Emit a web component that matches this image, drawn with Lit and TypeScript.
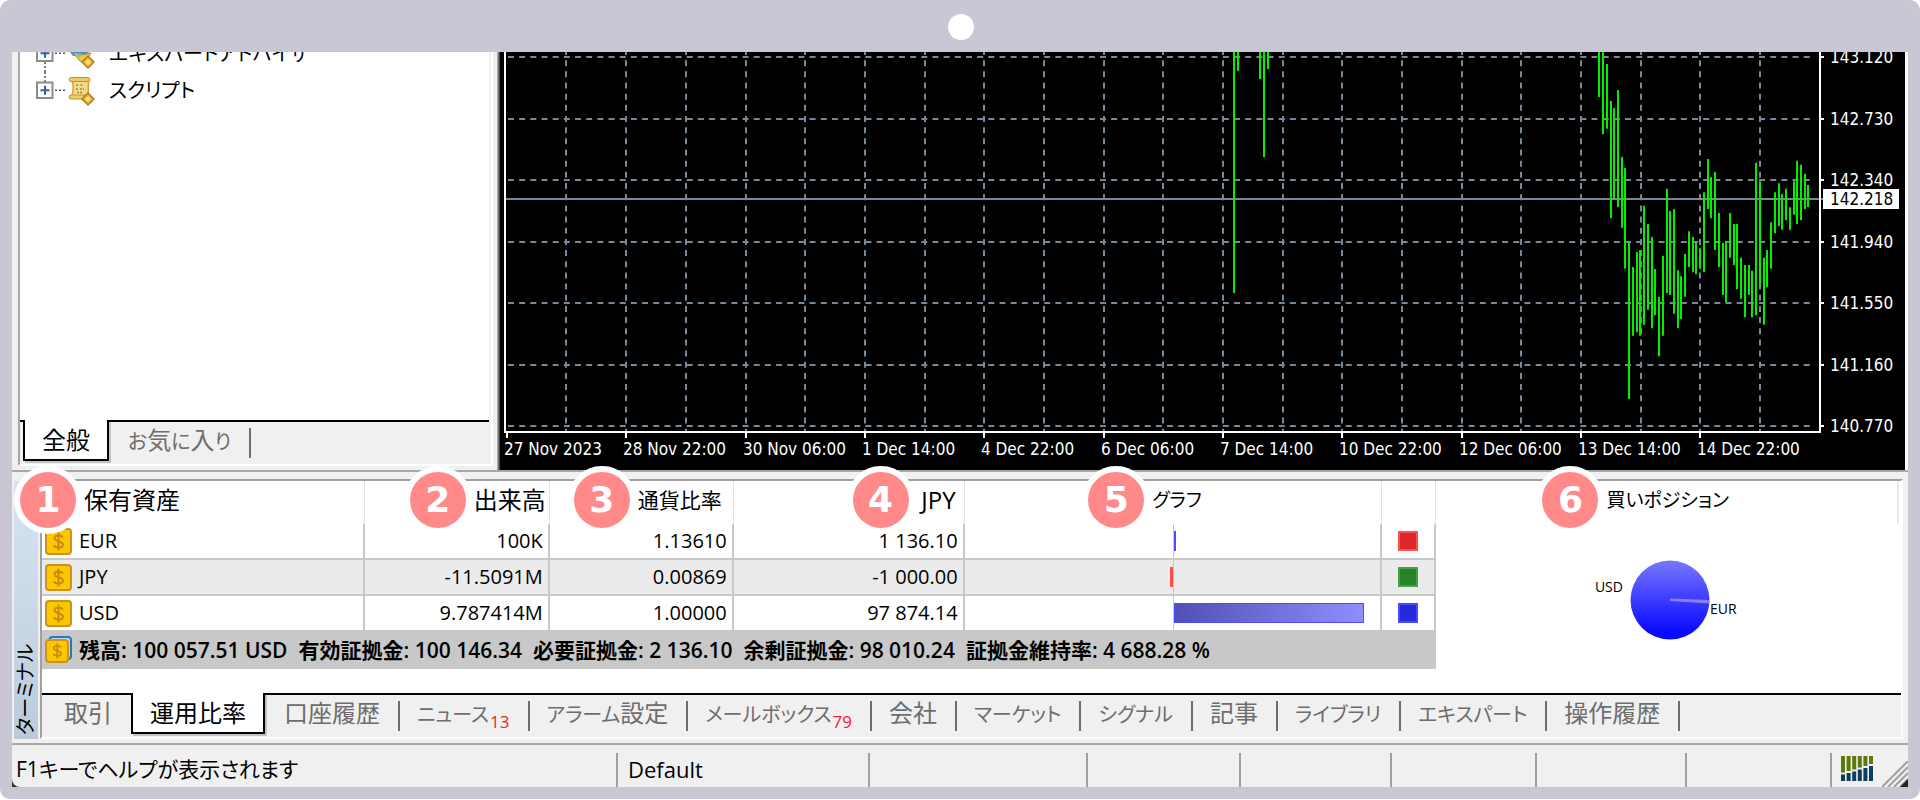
import { LitElement, html, svg, css } from "lit";
import { customElement, property, state } from "lit/decorators.js";
import { classMap } from "lit/directives/class-map.js";

const FONT = css`"Open Sans", "Noto Sans CJK JP", sans-serif`;

/* ---------- price chart ---------- */

const PRICES = ["143.120", "142.730", "142.340", "141.940", "141.550", "141.160", "140.770"];
const DATES = [
  "27 Nov 2023", "28 Nov 22:00", "30 Nov 06:00", "1 Dec 14:00", "4 Dec 22:00", "6 Dec 06:00",
  "7 Dec 14:00", "10 Dec 22:00", "12 Dec 06:00", "13 Dec 14:00", "14 Dec 22:00",
];
/* Highs and lows of consecutive bars, in thirds of a chart unit from the top edge. */
const BARS: [number, number][] = [
  [0, 135], [0, 247], [36, 230], [147, 499], [169, 438], [114, 465], [315, 527], [348, 650],
  [572, 1041], [645, 851], [600, 841], [594, 851], [461, 818], [516, 773], [555, 829], [651, 790],
  [734, 913], [611, 851], [410, 723], [477, 729], [471, 785], [655, 829], [673, 801], [606, 734],
  [538, 645], [555, 661], [572, 667], [589, 650], [421, 661], [321, 471], [376, 499], [360, 594],
  [483, 645], [572, 729], [567, 751], [483, 617], [516, 639], [516, 712], [617, 740], [639, 796],
  [639, 729], [656, 796], [332, 790], [388, 701], [617, 818], [594, 706], [511, 650], [421, 544],
  [394, 522], [427, 533], [410, 505], [466, 533], [388, 488], [326, 516], [338, 505], [365, 471],
  [399, 465],
];
const EARLY_BARS: [number, number][] = [[733, 241], [737, 19], [759, 27], [763, 105], [767, 17]];

@customElement("price-chart")
class PriceChart extends LitElement {
  static styles = css`
    :host { display: block; background: #000; }
    .chart { display: block; width: 100%; height: auto; }
    .grid { stroke: #778899; stroke-width: 2; stroke-dasharray: 6 5.17; }
    .now { stroke: #778899; stroke-width: 2; }
    .axis { stroke: #fff; stroke-width: 2; fill: none; }
    .bar { stroke: #00f000; stroke-width: 2; }
    .label { fill: #fff; font: 17px "DejaVu Sans Condensed", "Open Sans", sans-serif; }
    .box { fill: #fff; }
    .dark { fill: #000; }
  `;
  render() {
    const gx = (k: number) => 5.8 + 59.68 * k;
    const gy = (k: number) => 5 + 61.55 * k;
    return html`
      <svg class="chart" viewBox="0 0 1404 418" role="img" aria-label="Price chart">
        ${Array.from({ length: 21 }, (_, i) => svg`<line class="grid" x1=${Math.round(gx(i + 1))} x2=${Math.round(gx(i + 1))} y1="-3" y2="380"/>`)}
        ${PRICES.map((p, i) => svg`
          <line class="grid" x1="7" x2="1312" y1=${Math.round(gy(i))} y2=${Math.round(gy(i))}/>
          <line class="axis" x1="1318" x2="1323" y1=${Math.round(gy(i))} y2=${Math.round(gy(i))}/>
          <text class="label" x="1329" y=${Math.round(gy(i)) + 6}>${p}</text>`)}
        <line class="now" x1="4" x2="1322" y1="147" y2="147"/>
        ${BARS.map(([hi, lo], i) => svg`<line class="bar" x1=${Math.round(1098.3 + 3.735 * i)} x2=${Math.round(1098.3 + 3.735 * i)} y1=${hi / 3} y2=${lo / 3}/>`)}
        ${EARLY_BARS.map(([x, lo]) => svg`<line class="bar" x1=${x} x2=${x} y1="0" y2=${lo}/>`)}
        <path class="axis" d="M4 0V380H1319V0"/>
        ${DATES.map((d, i) => svg`
          <line class="axis" x1=${Math.round(gx(2 * i))} x2=${Math.round(gx(2 * i))} y1="380" y2="386"/>
          <text class="label" x=${Math.round(gx(2 * i)) - 3} y="403">${d}</text>`)}
        <rect class="box" x="1322" y="137" width="76" height="20"/>
        <text class="label dark" x="1329" y="153">142.218</text>
      </svg>`;
  }
}

/* ---------- numbered marker with its caption ---------- */

@customElement("marked-label")
class MarkedLabel extends LitElement {
  static styles = css`
    :host { position: relative; display: inline-block; min-width: 39px; }
    .badge {
      position: absolute; right: calc(100% + 2px); top: 50%; margin-top: -34px; z-index: 2;
      box-sizing: border-box; width: 68px; height: 68px; border: 6px solid #fff; border-radius: 50%;
      background: #ff8a89; color: #fff; text-align: center;
      font: bold 36px/56px "DejaVu Sans", sans-serif;
    }
  `;
  @property() n = "";
  render() {
    return html`<span class="badge">${this.n}</span><slot></slot>`;
  }
}

/* ---------- tab strip ---------- */

interface Tab { label: string; count?: string; }

@customElement("tab-strip")
class TabStrip extends LitElement {
  static styles = css`
    :host { display: block; }
    .strip { display: flex; align-items: flex-start; height: 42px; border-top: 2px solid #000; background: #f0f0f0; padding-left: 3px; }
    .tab {
      display: flex; align-items: baseline; height: 38px; padding: 0 19px; border: 0; background: none; color: #6d6d6d;
      font: 24px/36px ${FONT}; white-space: nowrap; position: relative;
    }
    .kana { font-size: 20px; font-feature-settings: "palt"; }
    .ruled { padding: 0 20px 0 17px; }
    .ruled::after {
      content: ""; position: absolute; right: 0; top: 6px; height: 30px; border-right: 2px solid #6d6d6d;
    }
    .active {
      height: 41px; margin-top: -2px; padding: 2px 17px 0; border: solid #000; border-width: 0 2px 2px;
      background: #fff; color: #000; box-shadow: 2px 2px 0 #c4c4c4;
    }
    .active + .ruled { padding-left: 19px; }
    .count { color: #f02030; font-size: 17px; padding-left: 1px; transform: translateY(6px); }
  `;
  @property({ attribute: false }) tabs: Tab[] = [];
  @property({ type: Number }) selected = 0;
  render() {
    return html`<div class="strip" role="tablist">
      ${this.tabs.map((t, i) => html`
        <button role="tab" aria-selected=${i === this.selected}
          class=${classMap({ tab: true, active: i === this.selected, ruled: i > this.selected })}
          @click=${() => (this.selected = i)}>
          <span>${t.label.split(/([\u3040-\u30ff]+)/).map((part) =>
            /[\u3040-\u30ff]/.test(part) ? html`<span class="kana">${part}</span>` : part)}</span>${
            t.count ? html`<span class="count">${t.count}</span>` : ""}
        </button>`)}
    </div>`;
  }
}

/* ---------- icons ---------- */

const coin = html`<svg width="27" height="27" viewBox="0 0 27 27" aria-hidden="true">
  <rect x="1" y="1" width="25" height="25" rx="3" fill="#fbc800" stroke="#d0901a" stroke-width="2"/>
  <path d="M18 9.500c-1-1.500-2.500-2-4.500-2-2.600 0-4 1.100-4 2.800 0 4.200 8.500 2 8.500 6.300 0 1.900-1.700 3-4.300 3-2.200 0-3.900-.7-4.900-2.400M13.500 4.500v18" fill="none" stroke="#c98a12" stroke-width="2"/>
</svg>`;
const coins = html`<svg width="27" height="27" viewBox="0 0 27 27" aria-hidden="true">
  <rect x="4.500" y="1" width="21.500" height="22" rx="3" fill="#b9dcf8" stroke="#2b74b8" stroke-width="2"/>
  <rect x="1" y="4" width="22" height="22" rx="3" fill="#fbc800" stroke="#d0901a" stroke-width="2"/>
  <path d="M16 11.500c-.8-1.200-2-1.600-3.800-1.600-2.200 0-3.400.9-3.400 2.300 0 3.500 7.200 1.600 7.200 5.200 0 1.600-1.400 2.500-3.600 2.500-1.900 0-3.300-.6-4.100-2M12.200 7.500v15" fill="none" stroke="#c98a12" stroke-width="1.800"/>
</svg>`;
const plusBox = html`<svg width="30" height="37" viewBox="0 0 30 37" aria-hidden="true">
  <path d="M9 0v10M9 27v10" stroke="#555" stroke-width="1.500" stroke-dasharray="2 2"/>
  <rect x="1" y="10.500" width="15.500" height="15.500" fill="#fcfcfc" stroke="#8c8c8c" stroke-width="2"/>
  <path d="M4.500 18.300h9M9 13.800v9" stroke="#3a5da8" stroke-width="2"/>
  <path d="M19 18.300h11" stroke="#555" stroke-width="1.500" stroke-dasharray="2 2"/>
</svg>`;
const lastPlusBox = html`<svg width="30" height="37" viewBox="0 0 30 37" aria-hidden="true">
  <path d="M9 0v10" stroke="#555" stroke-width="1.500" stroke-dasharray="2 2"/>
  <rect x="1" y="10.500" width="15.500" height="15.500" fill="#fcfcfc" stroke="#8c8c8c" stroke-width="2"/>
  <path d="M4.500 18.300h9M9 13.800v9" stroke="#3a5da8" stroke-width="2"/>
  <path d="M19 18.300h11" stroke="#555" stroke-width="1.500" stroke-dasharray="2 2"/>
</svg>`;
const diamond = svg`<path d="M20 17l6 6-6 6-6-6z" fill="#e9b63a" stroke="#a8741c" stroke-width="1.300"/><path d="M20 20l3 3-3 3-3-3z" fill="#ffe07a"/>`;
const expertIcon = html`<svg width="28" height="30" viewBox="0 0 28 30" aria-hidden="true">
  <path d="M1 12l8-4 9 2 3 4-9 3-7 0z" fill="#4d8fc6"/>
  <path d="M5 14l7 8 5 1 6-9-9 2z" fill="#f0c850" stroke="#b98a25"/>
  <path d="M6 14l5 5 4-4z" fill="#9cc07a"/>
  ${diamond}
</svg>`;
const scriptIcon = html`<svg width="28" height="30" viewBox="0 0 28 30" aria-hidden="true">
  <path d="M3 4c3 3 3 12 0 17h16c3-5 0-12 2-17z" fill="#f2dc8c" stroke="#cfa03c" stroke-width="1.500"/>
  <rect x="1" y="1.500" width="21" height="4" rx="2" fill="#f0cc5c" stroke="#c1923a"/>
  <rect x="1" y="19" width="18" height="4" rx="2" fill="#f0cc5c" stroke="#c1923a"/>
  <path d="M8 9h3M12.500 9h3M8 13h2M12 13h4M9 16.500h6" stroke="#a98438" stroke-width="1.300" stroke-dasharray="2 1"/>
  ${diamond}
</svg>`;
const signal = html`<svg width="33" height="26" viewBox="0 0 33 26" aria-hidden="true">
  ${[0, 1, 2, 3, 4, 5].map((i) => {
    const split = [17.500, 16, 14.500, 12.500, 11, 9][i];
    return svg`<rect x=${i * 5.600} y="0" width="4" height=${split - 1} fill="#5c7a0a"/>
      <rect x=${i * 5.600} y=${split + 1} width="4" height=${24 - split} fill="#0a3f60"/>`;
  })}
</svg>`;
const grip = html`<svg width="26" height="26" viewBox="0 0 26 26" aria-hidden="true">
  <path d="M0 26L26 0M6 26L26 6M12 26L26 12M18 26l8-8" stroke="#a0a0a0" stroke-width="2"/>
  <path d="M26 18v8h-8z" fill="#222"/>
</svg>`;

/* ---------- application ---------- */

interface Asset { name: string; volume: string; rate: string; value: string; share: number; color: string; }

const ASSETS: Asset[] = [
  { name: "EUR", volume: "100K", rate: "1.13610", value: "1 136.10", share: 1, color: "red" },
  { name: "JPY", volume: "-11.5091M", rate: "0.00869", value: "-1 000.00", share: -1, color: "green" },
  { name: "USD", volume: "9.787414M", rate: "1.00000", value: "97 874.14", share: 92, color: "blue" },
];
const SUMMARY = [
  "残高: 100 057.51 USD", "有効証拠金: 100 146.34", "必要証拠金: 2 136.10",
  "余剰証拠金: 98 010.24", "証拠金維持率: 4 688.28 %",
];

@customElement("app-root")
class AppRoot extends LitElement {
  static styles = css`
    :host { display: block; background: #fff; color: #000; font: 22px/28px ${FONT}; }
    .device { padding: 0 12px 12px; border-radius: 10px; background: #c8c7d3; }
    .bezel { display: flex; justify-content: center; align-items: center; box-sizing: border-box; height: 52px; padding: 2px 0 0 2px; }
    .camera { width: 26px; height: 26px; border-radius: 50%; background: #fff; }
    .screen { background: #333; overflow: hidden; }
    .upper { display: grid; grid-template-columns: 488fr 1408fr; background: #f0f0f0; }
    .navigator { display: flex; flex-direction: column; min-width: 0; margin: 0 7px 4px 6px; padding-right: 2px; border: 2px solid; border-color: #fff #fff #fff #a8a8a8; border-top: 0; }
    .tree { flex: 1; min-height: 0; overflow: hidden; background: #fff; margin: 0; padding: 0; list-style: none; }
    .branch { display: flex; align-items: center; height: 37px; padding-left: 16px; }
    .branch:first-child { margin-top: -17px; }
    .branch svg { flex: none; }
    .branch .text { margin-left: 13px; font-size: 20px; font-feature-settings: "palt"; white-space: nowrap; }
    .branch svg + svg { margin-left: 2px; }
    .chartpane { border-left: 1px solid #000; border-right: 3px solid #fff; background: #000; box-shadow: -1px 0 #444, -2px 0 #777, -3px 0 #aaa; }

    .terminal { display: grid; grid-template-columns: 24px minmax(0, 1fr); column-gap: 2px; padding: 0 5px 4px 2px; border-top: 2px solid #a8a8a8; background: #f0f0f0; }
    .caption { margin-top: 9px; background: linear-gradient(#bccbdb, #d7e4f2); display: flex; align-items: center; writing-mode: vertical-rl; text-orientation: sideways; transform: rotate(180deg); font-size: 20px; line-height: 24px; font-feature-settings: "palt"; }
    .caption span { padding-top: 4px; }
    .pane { margin-top: 7px; border-top: 2px solid #a0a0a0; border-left: 2px solid #a0a0a0; border-right: 2px solid #fff; border-bottom: 2px solid #fff; background: #fff; }
    .body { display: grid; grid-template-columns: 1396fr 463fr; align-items: start; margin-right: 2px; height: 212px; }
    .assets { width: 100%; border-collapse: separate; border-spacing: 0; table-layout: fixed; }
    .assets th { height: 43px; padding: 0 3px 0 0; font-weight: 400; text-align: right; vertical-align: top; border-right: 1px solid #e2e2e2; line-height: 38px; white-space: nowrap; }
    .assets th.wide { font-size: 24px; }
    .assets th.first { text-align: left; padding-left: 42px; }
    .assets th.gap { padding-right: 11px; font-size: 21px; }
    .assets th.lastnum { padding-right: 8px; }
    .assets th.center { text-align: center; padding: 0 0 0 8px; font-size: 19px; font-feature-settings: "palt"; }
    .assets td { height: 34px; padding: 0 5px; border-right: 2px solid #c8c8c8; border-bottom: 2px solid #c8c8c8; text-align: right; font-size: 20px; line-height: 28px; white-space: nowrap; box-sizing: content-box; }
    .assets tr.alt td { background: #ebebeb; }
    .assets td.name { padding: 0 0 0 3px; text-align: left; }
    .assets td.graph { padding: 0; }
    .assets td.key { padding: 0; }
    .assets .sum td { height: 35px; padding: 0 0 0 3px; background: #c8c8c8; text-align: left; font-size: 21px; font-weight: 600; }
    .cell { display: flex; align-items: center; gap: 7px; }
    .totals { display: flex; gap: 11px; }
    .track { display: grid; grid-template-columns: 1fr 1fr; height: 34px; align-items: center; }
    .half { display: flex; align-items: center; height: 100%; min-width: 0; }
    .half.minus { justify-content: flex-end; }
    .half.plus { border-left: 1px solid #c8c8c8; }
    .bar { box-sizing: border-box; min-width: 2px; height: 20px; border: 1px solid #4a4aff; background: linear-gradient(90deg, #5050b4, #8e8eff); }
    .bar.loss { border-color: #ff4a4a; background: #ff5050; }
    .swatch { display: block; box-sizing: border-box; width: 20px; height: 20px; margin: 0 auto; border: 2px solid; }
    .red { background: #dc2828; border-color: #ff5050; }
    .green { background: #288228; border-color: #46a046; }
    .blue { background: #2828dc; border-color: #4848ff; }
    .long { display: flex; flex-direction: column; margin: 0; }
    .long figcaption { height: 43px; line-height: 38px; padding-left: 170px; border-right: 2px solid #e8e8e8; font-size: 19px; font-feature-settings: "palt"; white-space: nowrap; }
    .pie { display: flex; justify-content: center; align-items: flex-start; padding: 36px 4px 0 0; font-size: 14px; line-height: 20px; }
    .pie .usd { padding: 17px 7px 0 0; }
    .pie .eur { padding-top: 39px; }

    .status { display: grid; grid-template-columns: 606fr 252fr 218fr 153fr 151fr 145fr 150fr 145fr 76fr; border-top: 2px solid #a8a8a8; background: #f0f0f0; border-bottom-left-radius: 8px; overflow: hidden; padding-top: 8px; font-feature-settings: "palt"; }
    .field { height: 34px; line-height: 32px; box-sizing: border-box; border-right: 2px solid #a0a0a0; padding-left: 10px; white-space: nowrap; }
    .field.help { padding-left: 4px; font-size: 21px; }
    .field.tools { border: 0; padding: 0 0 0 9px; display: flex; justify-content: space-between; align-items: flex-end; }
    .tools .meter { align-self: flex-start; height: 26px; padding-top: 3px; }
    .tools svg { display: block; }
  `;

  @state() private terminalTabs: Tab[] = [
    { label: "取引" }, { label: "運用比率" }, { label: "口座履歴" }, { label: "ニュース", count: "13" },
    { label: "アラーム設定" }, { label: "メールボックス", count: "79" }, { label: "会社" }, { label: "マーケット" },
    { label: "シグナル" }, { label: "記事" }, { label: "ライブラリ" }, { label: "エキスパート" }, { label: "操作履歴" },
  ];
  @state() private navigatorTabs: Tab[] = [{ label: "全般" }, { label: "お気に入り" }];

  private row(a: Asset, i: number) {
    const size = `width:${Math.abs(a.share)}%`;
    return html`<tr class=${classMap({ alt: i % 2 === 1 })}>
      <td class="name"><div class="cell">${coin}<span>${a.name}</span></div></td>
      <td>${a.volume}</td><td>${a.rate}</td><td>${a.value}</td>
      <td class="graph"><div class="track">
        <div class="half minus">${a.share < 0 ? html`<div class="bar loss" style=${size}></div>` : ""}</div>
        <div class="half plus">${a.share > 0 ? html`<div class="bar" style=${size}></div>` : ""}</div>
      </div></td>
      <td class="key"><span class="swatch ${a.color}"></span></td>
    </tr>`;
  }

  render() {
    return html`<div class="device">
      <div class="bezel"><div class="camera"></div></div>
      <main class="screen">
        <div class="upper">
          <section class="navigator">
            <ul class="tree">
              <li class="branch">${plusBox}${expertIcon}<span class="text">エキスパートアドバイザ</span></li>
              <li class="branch">${lastPlusBox}${scriptIcon}<span class="text">スクリプト</span></li>
            </ul>
            <tab-strip .tabs=${this.navigatorTabs}></tab-strip>
          </section>
          <section class="chartpane"><price-chart></price-chart></section>
        </div>
        <section class="terminal">
          <div class="caption"><span>ターミナル</span></div>
          <div class="pane">
            <div class="body">
              <table class="assets">
                <colgroup>
                  <col style="width:${32300 / 1395}%"><col style="width:${18500 / 1395}%"><col style="width:${18400 / 1395}%">
                  <col style="width:${23100 / 1395}%"><col style="width:${41800 / 1395}%"><col style="width:${5400 / 1395}%">
                </colgroup>
                <thead><tr>
                  <th class="wide first"><marked-label n="1">保有資産</marked-label></th>
                  <th class="wide"><marked-label n="2">出来高</marked-label></th>
                  <th class="gap"><marked-label n="3">通貨比率</marked-label></th>
                  <th class="wide lastnum"><marked-label n="4">JPY</marked-label></th>
                  <th class="center"><marked-label n="5">グラフ</marked-label></th>
                  <th></th>
                </tr></thead>
                <tbody>
                  ${ASSETS.map((a, i) => this.row(a, i))}
                  <tr class="sum"><td colspan="6"><div class="cell">${coins}<div class="totals">${SUMMARY.map((s) => html`<span>${s}</span>`)}</div></div></td></tr>
                </tbody>
              </table>
              <figure class="long">
                <figcaption><marked-label n="6">買いポジション</marked-label></figcaption>
                <div class="pie">
                  <span class="usd">USD</span>
                  <svg width="80" height="80" viewBox="-40 -40 80 80" role="img" aria-label="USD 99%, EUR 1%">
                    <defs><linearGradient id="pie" x1="0" y1="0" x2="0" y2="1">
                      <stop offset="0" stop-color="#7878ff"/><stop offset=".9" stop-color="#0a0aff"/>
                    </linearGradient></defs>
                    <circle r="39.500" fill="url(#pie)"/>
                    <path d="M0 -1.500L39.500 0V3.500L0 1z" fill="#8a80f4"/>
                  </svg>
                  <span class="eur">EUR</span>
                </div>
              </figure>
            </div>
            <tab-strip .tabs=${this.terminalTabs} selected="1"></tab-strip>
          </div>
        </section>
        <footer class="status">
          <div class="field help">F1キーでヘルプが表示されます</div>
          <div class="field">Default</div>
          <div class="field"></div><div class="field"></div><div class="field"></div>
          <div class="field"></div><div class="field"></div><div class="field"></div>
          <div class="field tools"><span class="meter">${signal}</span>${grip}</div>
        </footer>
      </main>
    </div>`;
  }
}
